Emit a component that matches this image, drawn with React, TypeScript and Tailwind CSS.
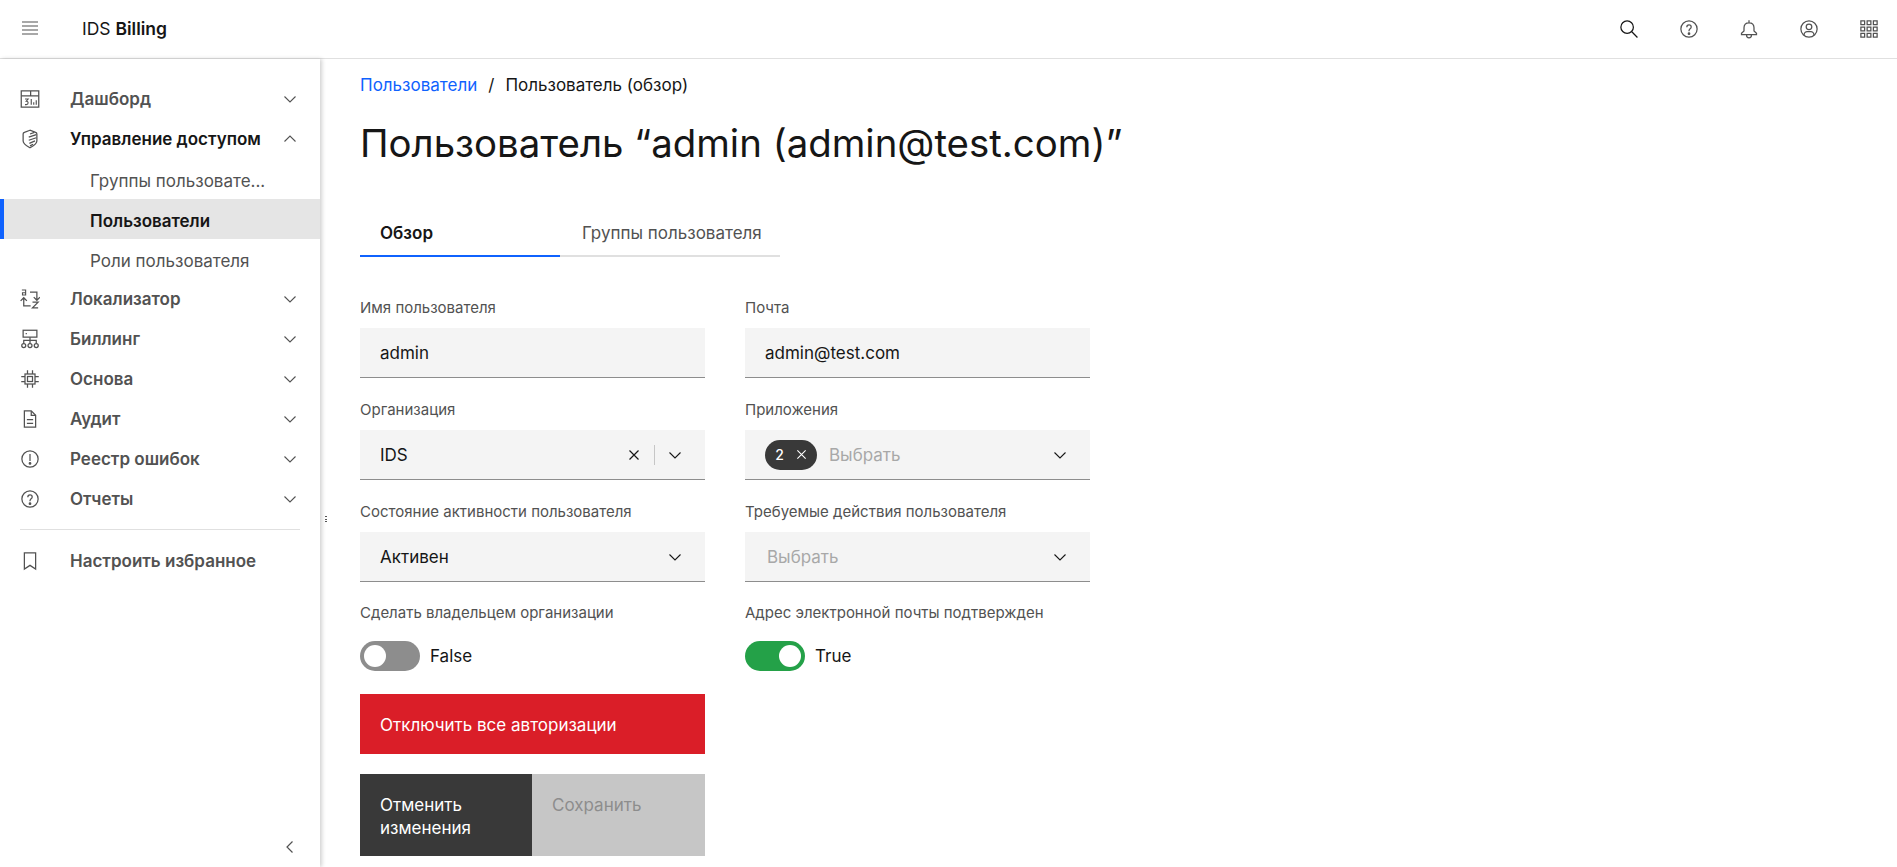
import { ReactNode } from "react";

const FONT = "font-['Inter','Liberation_Sans',sans-serif]";

type IconProps = { className?: string; children: ReactNode };

function Icon({ className, children }: IconProps) {
  return (
    <svg
      viewBox="0 0 32 32"
      fill="none"
      stroke="currentColor"
      strokeWidth="2"
      className={className}
    >
      {children}
    </svg>
  );
}

function Chevron({ up, className }: { up?: boolean; className?: string }) {
  return (
    <svg viewBox="0 0 16 16" fill="none" stroke="currentColor" strokeWidth="1.1" className={className}>
      <path d={up ? "M2.5 10.5 8 5l5.5 5.5" : "M2.5 5.5 8 11l5.5-5.5"} />
    </svg>
  );
}

const dashboardIcon = (
  <>
    <rect x="2" y="3" width="28" height="26" />
    <path d="M2 11h28M17 3v8" />
    <path d="M8 16h5l-3 3.500c2 0 3 1 3 2.500s-1 3-3 3H8M18 16v9M22 21v4M26 18v7" strokeWidth="1.800" />
  </>
);

const shieldIcon = (
  <>
    <path d="M16 2 7 5.500C5.500 6 5 7 5 8v11c0 5 6 8 11 11 5-3 11-6 11-11V8c0-1-.500-2-2-2.500z" />
    <path d="m16 8 7-2.500M14 13l12-4M14 18l12-4M15 23l9-4M16 27l5-2.500" />
  </>
);

const localeIcon = (
  <>
    <path d="M16 5h11v13M22 13l5 5 5-5" />
    <path d="M17 27H6V14M1 19l5-5 5 5" />
    <path d="M20 21h9l-9 9h9" />
    <path d="M3 1.500h6v8H4V6h5" strokeWidth="1.800" />
  </>
);

const billingIcon = (
  <>
    <rect x="5" y="2" width="22" height="11" />
    <path d="M9 7.500h2M16 13v5M6 23v-5h20v5M16 18v5" />
    <circle cx="6" cy="26.500" r="3.200" />
    <circle cx="16" cy="26.500" r="3.200" />
    <circle cx="26" cy="26.500" r="3.200" />
  </>
);

const chipIcon = (
  <>
    <rect x="8" y="8" width="16" height="16" />
    <rect x="12" y="12" width="8" height="8" />
    <path d="M2 12h6M2 20h6M24 12h6M24 20h6M12 2v6M20 2v6M12 24v6M20 24v6" />
  </>
);

const docIcon = (
  <>
    <path d="M18 3H7v26h18V10z" />
    <path d="M18 3v7h7M11 17h10M11 23h10" />
  </>
);

const warnIcon = (
  <>
    <circle cx="16" cy="16" r="13" />
    <path d="M16 8v11" />
    <circle cx="16" cy="23" r="1.200" fill="currentColor" />
  </>
);

const helpIcon = (
  <>
    <circle cx="16" cy="16" r="13" />
    <path d="M12.500 13c0-2 1.500-3.500 3.500-3.500s3.500 1.400 3.500 3.200c0 3-3.500 3-3.500 6v.800" />
    <circle cx="16" cy="23.500" r="1.200" fill="currentColor" />
  </>
);

const bookmarkIcon = <path d="M7 3h18v26l-9-6-9 6z" />;

type NavItem = { label: string; icon: ReactNode; open?: boolean; noArrow?: boolean };

const topNav: NavItem[] = [
  { label: "Дашборд", icon: dashboardIcon },
  { label: "Управление доступом", icon: shieldIcon, open: true },
];

const restNav: NavItem[] = [
  { label: "Локализатор", icon: localeIcon },
  { label: "Биллинг", icon: billingIcon },
  { label: "Основа", icon: chipIcon },
  { label: "Аудит", icon: docIcon },
  { label: "Реестр ошибок", icon: warnIcon },
  { label: "Отчеты", icon: helpIcon },
];

function NavRow({ item }: { item: NavItem }) {
  return (
    <div className="flex h-10 items-center pl-5 pr-[22px]">
      <Icon className="h-5 w-5 shrink-0 text-[#525252]">{item.icon}</Icon>
      <span
        className={`ml-[30px] flex-1 pt-[2px] text-[17px] font-semibold ${item.open ? "text-[#161616]" : "text-[#525252]"}`}
      >
        {item.label}
      </span>
      {!item.noArrow && <Chevron up={item.open} className="h-4 w-4 text-[#525252]" />}
    </div>
  );
}

function SubRow({ label, active }: { label: string; active?: boolean }) {
  return (
    <div
      className={`flex h-10 items-center border-l-4 pt-[6px] pl-[86px] text-[17px] ${
        active
          ? "border-[#0f62fe] bg-[#e5e5e5] font-semibold text-[#161616]"
          : "border-transparent text-[#525252]"
      }`}
    >
      {label}
    </div>
  );
}

function Sidebar() {
  return (
    <aside className="relative flex w-[320px] shrink-0 flex-col pt-5 shadow-[2px_0_4px_rgba(0,0,0,0.18)]">
      {topNav.map((item) => (
        <NavRow key={item.label} item={item} />
      ))}
      <SubRow label="Группы пользовате..." />
      <SubRow label="Пользователи" active />
      <SubRow label="Роли пользователя" />
      {restNav.map((item) => (
        <NavRow key={item.label} item={item} />
      ))}
      <div className="mx-5 mt-[10px] mb-[11px] h-px bg-[#e0e0e0]" />
      <NavRow item={{ label: "Настроить избранное", icon: bookmarkIcon, noArrow: true }} />
      <svg viewBox="0 0 16 16" fill="none" stroke="#525252" strokeWidth="1.200" className="mt-auto mb-[12px] ml-[282px] h-4 w-4">
        <path d="M10.500 2.500 5 8l5.500 5.500" />
      </svg>
      <div className="absolute top-[457px] right-[-7px] flex h-[6px] w-[2px] flex-col justify-between">
        <span className="h-px w-[2px] bg-[#525252]" />
        <span className="h-px w-[2px] bg-[#525252]" />
        <span className="h-px w-[2px] bg-[#525252]" />
      </div>
    </aside>
  );
}

function Header() {
  return (
    <header className="flex h-[59px] shrink-0 items-center border-b border-[#e0e0e0] pr-[18px] pl-[22px]">
      <svg viewBox="0 0 16 14" stroke="#525252" strokeWidth="1.100" className="mb-[2px] h-[14px] w-4">
        <path d="M0 1h16M0 5h16M0 9h16M0 13h16" />
      </svg>
      <div className="ml-[44px] text-[17.500px] text-[#161616]">
        IDS <span className="font-semibold">Billing</span>
      </div>
      <div className="ml-auto flex items-center gap-[40px]">
        <Icon className="h-5 w-5 text-[#161616]">
          <circle cx="13" cy="13" r="10" />
          <path d="m20.500 20.500 9 9" />
        </Icon>
        <Icon className="h-5 w-5 text-[#525252]">{helpIcon}</Icon>
        <Icon className="h-5 w-5 text-[#525252]">
          <path d="M16 6c-5 0-8 3.500-8 8v5l-4 4v2h24v-2l-4-4v-5c0-4.500-3-8-8-8zM16 2v4M12 25c0 3 2 5 4 5s4-2 4-5" />
        </Icon>
        <Icon className="h-5 w-5 text-[#525252]">
          <circle cx="16" cy="16" r="13" />
          <circle cx="16" cy="12.500" r="4.500" />
          <path d="M8 26c0-4 3-6 5-6h6c2 0 5 2 5 6" />
        </Icon>
        <Icon className="h-5 w-5 text-[#525252]">
          <path d="M3 3h6v6H3zM13 3h6v6h-6zM23 3h6v6h-6zM3 13h6v6H3zM13 13h6v6h-6zM23 13h6v6h-6zM3 23h6v6H3zM13 23h6v6h-6zM23 23h6v6h-6z" />
        </Icon>
      </div>
    </header>
  );
}

function Field({ label, className, children }: { label: string; className?: string; children: ReactNode }) {
  return (
    <div className={`flex flex-col ${className ?? ""}`}>
      <label className="mb-[11px] h-5 pt-px text-[15px] leading-5 text-[#525252]">{label}</label>
      {children}
    </div>
  );
}

function Box({ children }: { children: ReactNode }) {
  return (
    <div className="flex h-[50px] items-center border-b border-[#8d8d8d] bg-[#f4f4f4] pr-[22px] pl-5 text-[17px] text-[#161616]">
      {children}
    </div>
  );
}

function Cross({ className }: { className?: string }) {
  return (
    <svg viewBox="0 0 12 12" stroke="currentColor" strokeWidth="1.200" className={className}>
      <path d="m1.500 1.500 9 9M10.500 1.500l-9 9" />
    </svg>
  );
}

function Toggle({ on, label }: { on?: boolean; label: string }) {
  return (
    <div className="flex items-center">
      <div
        className={`flex h-[30px] w-[60px] items-center rounded-full px-[4px] ${
          on ? "justify-end bg-[#24a148]" : "justify-start bg-[#8d8d8d]"
        }`}
      >
        <div className="h-[22px] w-[22px] rounded-full bg-white" />
      </div>
      <span className="ml-[10px] pt-[2px] text-[17px] text-[#161616]">{label}</span>
    </div>
  );
}

export default function App() {
  return (
    <div className={`flex h-[867px] flex-col overflow-hidden bg-white ${FONT}`}>
      <Header />
      <div className="flex min-h-0 flex-1">
        <Sidebar />
        <main className="flex-1 pt-[14px] pl-[40px]">
          <div className="flex h-6 items-center pt-[2px] text-[17px] text-[#161616]">
            <span className="text-[#0f62fe]">Пользователи</span>
            <span className="mx-[11px]">/</span>
            <span>Пользователь (обзор)</span>
          </div>
          <h1 className="mt-[18px] h-[56px] text-[38.400px] leading-[56px] font-normal text-[#161616]">
            Пользователь “admin (admin@test.com)”
          </h1>

          <div className="mt-[43px] flex w-[420px] text-[17px]">
            <div className="flex h-[43px] w-[200px] items-center border-b-2 border-[#0f62fe] pb-[2px] pl-5 font-semibold text-[#161616]">
              Обзор
            </div>
            <div className="flex h-[43px] w-[220px] items-center border-b-2 border-[#e0e0e0] pb-[2px] pl-[22px] text-[#525252]">
              Группы пользователя
            </div>
          </div>

          <div className="mt-[40px] grid w-[730px] grid-cols-2 gap-x-[40px] gap-y-[21px]">
            <Field label="Имя пользователя">
              <Box>
                <span className="pt-[2px]">admin</span>
              </Box>
            </Field>
            <Field label="Почта">
              <Box>
                <span className="pt-[2px]">admin@test.com</span>
              </Box>
            </Field>
            <Field label="Организация">
              <Box>
                <span className="flex-1 pt-[2px]">IDS</span>
                <Cross className="h-3 w-3 text-[#161616]" />
                <span className="mr-[12px] ml-[14px] h-5 w-px bg-[#c6c6c6]" />
                <Chevron className="h-4 w-4 text-[#161616]" />
              </Box>
            </Field>
            <Field label="Приложения">
              <Box>
                <span className="flex h-[30px] w-[52px] items-center justify-center gap-[12px] rounded-full bg-[#393939] text-sm font-medium text-white">
                  2 <Cross className="h-[11px] w-[11px]" />
                </span>
                <span className="ml-[12px] flex-1 pt-[2px] text-[#a8a8a8]">Выбрать</span>
                <Chevron className="h-4 w-4 text-[#161616]" />
              </Box>
            </Field>
            <Field label="Состояние активности пользователя">
              <Box>
                <span className="flex-1 pt-[2px]">Активен</span>
                <Chevron className="h-4 w-4 text-[#161616]" />
              </Box>
            </Field>
            <Field label="Требуемые действия пользователя">
              <Box>
                <span className="flex-1 pt-[2px] pl-[2px] text-[#a8a8a8]">Выбрать</span>
                <Chevron className="h-4 w-4 text-[#161616]" />
              </Box>
            </Field>
            <Field label="Сделать владельцем организации" className="-mt-px">
              <div className="pt-[8px]">
                <Toggle label="False" />
              </div>
            </Field>
            <Field label="Адрес электронной почты подтвержден" className="-mt-px">
              <div className="pt-[8px]">
                <Toggle on label="True" />
              </div>
            </Field>
          </div>

          <div className="mt-[23px] w-[345px]">
            <button className="flex h-[60px] w-full items-center bg-[#da1e28] px-5 pt-[4px] text-[17px] text-white">
              Отключить все авторизации
            </button>
            <div className="mt-5 flex h-[82px]">
              <button className="flex w-[172px] items-start bg-[#393939] px-5 pt-[20px] text-left text-[17px] leading-[23px] text-white">
                Отменить изменения
              </button>
              <button className="flex flex-1 items-start bg-[#c6c6c6] px-5 pt-[20px] text-left text-[17px] leading-[23px] text-[#8d8d8d]">
                Сохранить
              </button>
            </div>
          </div>
        </main>
      </div>
    </div>
  );
}
